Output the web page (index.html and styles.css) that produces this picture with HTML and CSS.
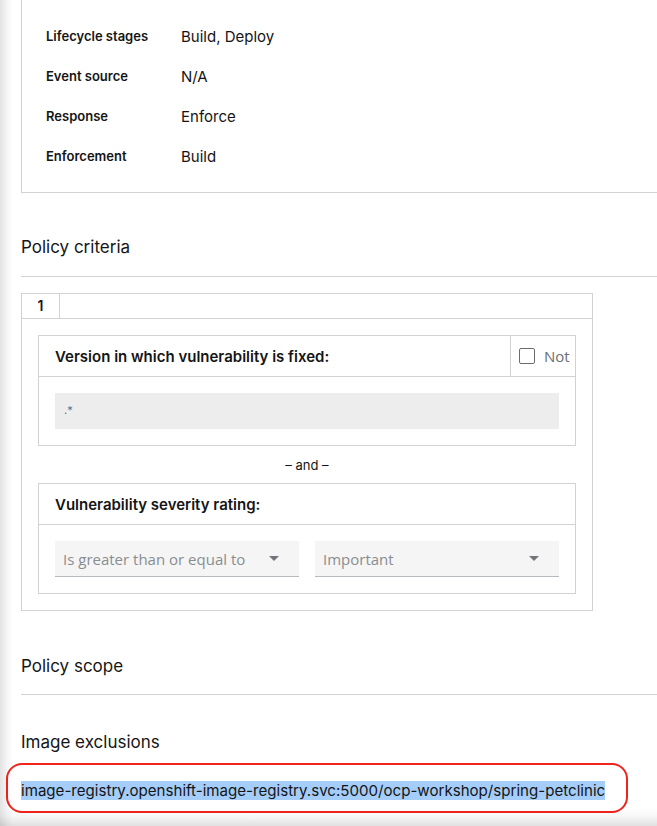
FILE: index.html
```html
<!DOCTYPE html>
<html>
<head>
<meta charset="utf-8">
<link rel="stylesheet" href="styles.css">
</head>
<body>
<div class="page">
  <div class="content">
    <div class="card">
      <div class="row"><div class="label">Lifecycle stages</div><div class="value">Build, Deploy</div></div>
      <div class="row"><div class="label">Event source</div><div class="value">N/A</div></div>
      <div class="row"><div class="label">Response</div><div class="value">Enforce</div></div>
      <div class="row"><div class="label">Enforcement</div><div class="value">Build</div></div>
    </div>

    <h2 class="section-title ruled crit">Policy criteria</h2>

    <div class="criteria">
      <div class="tabs"><div class="tab">1</div></div>
      <div class="criteria-body">
        <div class="group">
          <div class="group-head">
            <div class="group-title">Version in which vulnerability is fixed:</div>
            <div class="not"><span class="checkbox"></span><span class="not-label">Not</span></div>
          </div>
          <div class="group-body">
            <div class="input">.*</div>
          </div>
        </div>
        <div class="and">– and –</div>
        <div class="group">
          <div class="group-head">
            <div class="group-title">Vulnerability severity rating:</div>
          </div>
          <div class="group-body selects">
            <div class="select"><span>Is greater than or equal to</span><span class="caret"></span></div>
            <div class="select"><span>Important</span><span class="caret"></span></div>
          </div>
        </div>
      </div>
    </div>

    <h2 class="section-title ruled scope">Policy scope</h2>
    <h2 class="section-title excl">Image exclusions</h2>
    <div class="excl-item"><span class="hl">image-registry.openshift-image-registry.svc:5000/ocp-workshop/spring-petclinic</span></div>
    <div class="annot"></div>
  </div>
</div>
</body>
</html>
```

FILE: styles.css
```css
html, body {
  margin: 0;
  padding: 0;
  height: 826px;
  overflow: hidden;
  background: #fff;
}
body {
  font-family: "Inter", "Noto Sans", sans-serif;
  color: #151515;
}
.page {
  position: relative;
  height: 826px;
  overflow: hidden;
}
.page::after {
  content: "";
  position: absolute;
  inset: 0;
  pointer-events: none;
  background:
    linear-gradient(to right, rgba(0,0,0,0.11), rgba(0,0,0,0.03) 8px, rgba(0,0,0,0) 13px),
    linear-gradient(to top, rgba(0,0,0,0.12), rgba(0,0,0,0.03) 10px, rgba(0,0,0,0) 18px);
}
.content {
  position: relative;
  padding-left: 21px;
}
.card {
  border-left: 1px solid #d2d2d2;
  border-bottom: 1px solid #d2d2d2;
  padding: 16px 0 16px 24px;
}
.row {
  display: grid;
  grid-template-columns: 135px 1fr;
  height: 40px;
  align-items: center;
}
.label {
  font-size: 13px;
  font-weight: 600;
}
.value {
  font-size: 15px;
}
.section-title {
  margin: 0;
  font-size: 17px;
  font-weight: 400;
  line-height: 27px;
}
.ruled {
  border-bottom: 1px solid #d2d2d2;
  padding-bottom: 16px;
}
.crit {
  margin-top: 41px;
  padding-bottom: 15px;
}
.scope {
  margin-top: 42px;
  padding-bottom: 14px;
}
.criteria {
  margin-top: 16px;
  width: 570px;
  border: 1px solid #d2d2d2;
}
.tabs {
  display: flex;
  height: 24px;
  border-bottom: 1px solid #d2d2d2;
}
.tab {
  width: 37px;
  border-right: 1px solid #d2d2d2;
  text-align: center;
  font-size: 14px;
  font-weight: 600;
  line-height: 24px;
}
.criteria-body {
  padding: 16px;
}
.group {
  border: 1px solid #d2d2d2;
}
.group-head {
  display: flex;
  height: 40px;
  border-bottom: 1px solid #d2d2d2;
}
.group-title {
  flex: 1;
  padding-left: 16px;
  display: flex;
  align-items: center;
  font-size: 15px;
  font-weight: 600;
}
.not {
  box-sizing: border-box;
  width: 65px;
  border-left: 1px solid #d2d2d2;
  display: flex;
  align-items: center;
  padding-left: 8px;
  gap: 9px;
  overflow: hidden;
}
.checkbox {
  width: 14px;
  height: 14px;
  border: 1px solid #6a6e73;
  border-radius: 2px;
  flex: none;
}
.not-label {
  font-family: "Open Sans", sans-serif;
  font-size: 15px;
  color: #6a6e73;
}
.group-body {
  padding: 16px;
}
.input {
  height: 36px;
  background: #ededed;
  padding-left: 9px;
  font-size: 11px;
  color: #6a6e73;
  line-height: 34px;
}
.and {
  text-align: center;
  font-size: 13px;
  height: 37px;
  line-height: 38px;
}
.selects {
  display: flex;
  gap: 16px;
}
.select {
  flex: 1;
  height: 35px;
  background: #f5f5f5;
  border-bottom: 1px solid #b8bbbe;
  display: flex;
  align-items: center;
  justify-content: space-between;
  padding: 0 20px 0 8px;
  font-family: "Open Sans", sans-serif;
  font-size: 15px;
  color: #8a8d90;
}
.caret {
  width: 0;
  height: 0;
  border-left: 5px solid transparent;
  border-right: 5px solid transparent;
  border-top: 5px solid #72767b;
}
.excl {
  margin-top: 34px;
}
.excl-item {
  margin-top: 24px;
  font-size: 15.1px;
  line-height: 22px;
}
.hl {
  background: #a4cdf9;
}
.annot {
  position: absolute;
  left: 6px;
  top: 763px;
  width: 618px;
  height: 46px;
  border: 2px solid #f2231c;
  border-radius: 16px;
}
```
